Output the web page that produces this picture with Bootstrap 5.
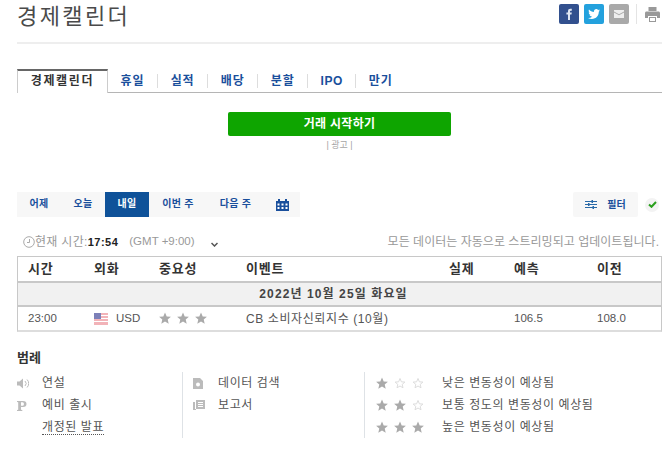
<!DOCTYPE html>
<html lang="ko">
<head>
    <meta charset="UTF-8">
    <meta name="viewport" content="width=device-width, initial-scale=1.0">
    <title>경제캘린더</title>
    <link href="https://cdn.jsdelivr.net/npm/bootstrap@5.3.2/dist/css/bootstrap.min.css" rel="stylesheet">
    <style>
        body { font-family: "Liberation Sans", "Noto Sans CJK KR", sans-serif; font-size: 12px; color: #333; background: #fff; }
        .page-wrap { width: 645px; margin-left: 17px; }
        .top-head { height: 44px; border-bottom: 2px solid #eee; }
        .page-title { font-size: 22px; line-height: 26px; letter-spacing: 2.4px; font-weight: 400; margin: 4px 0 0; color: #4a4a4a; }
        .share-wrap { gap: 5px; margin-top: 4px; margin-right: 2px; }
        .share-box { width: 20px; height: 20px; border-radius: 2px; }
        .share-fb { background: #32508e; }
        .share-tw { background: #23a1dd; }
        .share-mail { background: #a9a9a9; }
        .share-sep { width: 1px; height: 20px; background: #e4e4e4; margin: 0 3px 0 2px; }
        .cal-tabs { margin-top: 25px; height: 24px; border-bottom: 1px solid #b5b5b5; }
        .cal-tab { font-size: 12px; font-weight: 700; color: #1a4f9c; padding: 0 12.6px; line-height: 15px; border-right: 1px solid #ddd; margin-top: 5px; height: 14px; letter-spacing: .9px; }
        .cal-tab:last-child { border-right: 0; }
        .cal-tab-active { color: #333; width: 91px; height: 24px; line-height: 20px; margin-top: 0; padding: 0; text-align: center; border: 1px solid #ccc; border-top: 2px solid #666; border-bottom: 0; background: #fff; letter-spacing: 1.7px; }
        .cal-tab-latin { letter-spacing: .6px; padding: 0 12.2px; }
        .trade-zone { margin-top: 19px; }
        .trade-btn { width: 223px; height: 24px; background: #0ea500; color: #fff; font-weight: 700; font-size: 12px; border-radius: 2px; line-height: 24px; letter-spacing: .3px; }
        .ad-label { font-size: 9px; color: #a5a5a5; line-height: 12px; margin-top: 3px; }
        .date-bar { margin-top: 41px; }
        .date-nav { background: #f7f7f7; height: 25px; }
        .date-item { height: 25px; line-height: 24px; font-size: 10px; font-weight: 700; color: #1a4f9c; text-align: center; letter-spacing: .3px; }
        .date-on { background: #0f5299; color: #fff; }
        .filter-box { width: 65px; height: 25px; background: #f7f7f7; border-radius: 2px; font-size: 10px; font-weight: 700; color: #1a4f9c; gap: 10px; }
        .check-dot { width: 14px; height: 14px; border-radius: 50%; background: #f3f3f3; margin: 0 3px 0 7px; }
        .time-line { margin-top: 16px; height: 23px; color: #999; font-size: 12px; }
        .time-left { padding-left: 6px; letter-spacing: .3px; }
        .time-now { color: #222; font-weight: 700; font-size: 11px; letter-spacing: .5px; }
        .time-gmt { font-size: 11.5px; letter-spacing: 0; margin-left: 11px; }
        .time-right { letter-spacing: .03px; margin-right: 3px; }
        .cal-table { width: 645px; border: 1px solid #c8c8c8; border-bottom: 2px solid #ddd; }
        .cal-row { display: flex; align-items: center; }
        .cal-row > div { flex: none; }
        .cal-th { height: 26px; font-size: 13px; font-weight: 700; color: #333; letter-spacing: .8px; border-bottom: 2px solid #c8c8c8; }
        .cal-day { height: 24px; background: #f1f1f1; font-size: 12px; font-weight: 700; color: #444; justify-content: center; border-bottom: 2px solid #c8c8c8; letter-spacing: 1.1px; padding-right: 12px; }
        .cal-td { height: 23px; color: #555; font-size: 11.5px; }
        .c-time { width: 76px; padding-left: 10px; }
        .c-cur { width: 65px; }
        .c-imp { width: 87px; }
        .c-ev { width: 203px; }
        .cal-td .c-ev { font-size: 12px; letter-spacing: .6px; }
        .c-act { width: 65px; }
        .c-fore { width: 83px; }
        .flag-us { width: 14px; height: 12px; margin-right: 8px; }
        .legend-head { margin-top: 18px; font-size: 13px; font-weight: 700; color: #333; line-height: 16px; }
        .legend-grid { margin-top: 6px; height: 66px; color: #555; font-size: 12px; letter-spacing: .6px; }
        .legend-col { height: 66px; }
        .col-speech { width: 165px; }
        .col-data { width: 182px; padding-left: 10px; }
        .col-vol { padding-left: 11px; }
        .legend-item { height: 22px; }
        .legend-ico { width: 25px; flex: none; color: #aaa; }
        .dot-under { border-bottom: 1px dotted #555; line-height: 14px; }
        .star-cell { width: 58px; flex: none; margin-right: 8px; }
    </style>
</head>
<body>
    <div class="page-wrap">
        <div class="top-head d-flex justify-content-between align-items-start">
            <h1 class="page-title">경제캘린더</h1>
            <div class="share-wrap d-flex align-items-center">
                <span class="share-box share-fb d-flex align-items-center justify-content-center">
                    <svg width="8" height="12" viewBox="0 0 8 12"><path fill="#dfe6f2" d="M3 12V6.600H1.400V4.600H3V3.200C3 1.600 4 .8 5.300 .8H6.800V2.700H5.800C5.200 2.700 5 3 5 3.500V4.600H6.800L6.500 6.600H5V12z"/></svg>
                </span>
                <span class="share-box share-tw d-flex align-items-center justify-content-center">
                    <svg width="12" height="10" viewBox="0 0 12 10"><path fill="#fff" d="M12 1.200c-.4.200-.9.300-1.400.4.500-.3.900-.8 1.100-1.300-.5.300-1 .5-1.600.6C9.600.3 9 0 8.300 0 7 0 5.900 1.100 5.900 2.400c0 .2 0 .4.100.6C4 2.900 2.200 2 1 .5.800.9.700 1.300.7 1.700c0 .8.400 1.600 1.100 2-.4 0-.8-.1-1.100-.3 0 1.200.8 2.200 1.900 2.400-.4.100-.8.100-1.100 0 .3 1 1.200 1.700 2.300 1.700C3.900 8.400 2.500 8.900 1 8.900H0C1.100 9.600 2.400 10 3.800 10c4.500 0 7-3.700 7-7v-.3c.5-.4.900-.9 1.200-1.500z"/></svg>
                </span>
                <span class="share-box share-mail d-flex align-items-center justify-content-center">
                    <svg width="10" height="8" viewBox="0 0 10 8"><path fill="#eee" d="M0 0h10v1.500L5 4.200 0 1.500zM0 2.600l5 2.700 5-2.700V8H0z"/></svg>
                </span>
                <span class="share-sep"></span>
                <svg width="15" height="15" viewBox="0 0 15 15"><path fill="#999" d="M3.500 0h8v4h-8zM1.500 4.500h12c.8 0 1.500.7 1.500 1.500v5h-3v-2H3v2H0V6c0-.8.700-1.500 1.500-1.500zM4 10h7v5H4z"/><path fill="#fff" d="M5 11h5v3H5z"/></svg>
            </div>
        </div>

        <div class="cal-tabs d-flex">
            <div class="cal-tab cal-tab-active">경제캘린더</div>
            <div class="cal-tab">휴일</div>
            <div class="cal-tab">실적</div>
            <div class="cal-tab">배당</div>
            <div class="cal-tab">분할</div>
            <div class="cal-tab cal-tab-latin">IPO</div>
            <div class="cal-tab">만기</div>
        </div>

        <div class="trade-zone d-flex flex-column align-items-center">
            <div class="trade-btn text-center">거래 시작하기</div>
            <div class="ad-label">| 광고 |</div>
        </div>

        <div class="date-bar d-flex justify-content-between align-items-center">
            <div class="date-nav d-flex">
                <div class="date-item" style="width:44px">어제</div>
                <div class="date-item" style="width:44px">오늘</div>
                <div class="date-item date-on" style="width:44px">내일</div>
                <div class="date-item" style="width:58px">이번 주</div>
                <div class="date-item" style="width:57px">다음 주</div>
                <div class="date-item d-flex align-items-center justify-content-center" style="width:36px">
                    <svg width="13" height="12" viewBox="0 0 13 12"><path fill="#1a4f9c" d="M0 2h2V0h2v2h5V0h2v2h2v10H0z"/><path fill="#fff" d="M1.500 4.500h2v2h-2zM5.500 4.500h2v2h-2zM9.500 4.500h2v2h-2zM1.500 8h2v2h-2zM5.500 8h2v2h-2zM9.500 8h2v2h-2z"/></svg>
                </div>
            </div>
            <div class="d-flex align-items-center">
                <div class="filter-box d-flex align-items-center justify-content-center">
                    <svg width="12" height="9" viewBox="0 0 12 9"><path fill="none" stroke="#2a6aa8" d="M0 1.500h12M0 4.500h12M0 7.500h12"/><path fill="#2a6aa8" d="M6.500 0H8v3H6.500zM3 3h1.500v3H3zM7.500 6H9v3H7.500z"/></svg>
                    <span>필터</span>
                </div>
                <span class="check-dot d-flex align-items-center justify-content-center">
                    <svg width="9" height="7" viewBox="0 0 9 7"><path fill="none" stroke="#2ba01e" stroke-width="2" d="M1 3.500l2.500 2.300L8 1"/></svg>
                </span>
            </div>
        </div>

        <div class="time-line d-flex justify-content-between">
            <div class="time-left d-flex align-items-center align-self-start">
                <svg width="12" height="12" viewBox="0 0 12 12" fill="none" stroke="#aaa"><circle cx="6" cy="6" r="5.300"/><path d="M6.500 3v3.500H4"/></svg>
                <span class="ms-0">현재 시간:<span class="time-now">17:54</span></span>
                <span class="time-gmt">(GMT +9:00)</span>
                <svg class="ms-3 mt-1" width="7" height="5" viewBox="0 0 7 5"><path fill="none" stroke="#555" stroke-width="1.500" d="M.5 1l3 3 3-3"/></svg>
            </div>
            <div class="time-right align-self-start">모든 데이터는 자동으로 스트리밍되고 업데이트됩니다.</div>
        </div>

        <div class="cal-table">
            <div class="cal-row cal-th">
                <div class="c-time">시간</div>
                <div class="c-cur">외화</div>
                <div class="c-imp">중요성</div>
                <div class="c-ev">이벤트</div>
                <div class="c-act">실제</div>
                <div class="c-fore">예측</div>
                <div>이전</div>
            </div>
            <div class="cal-row cal-day">2022년 10월 25일 화요일</div>
            <div class="cal-row cal-td">
                <div class="c-time">23:00</div>
                <div class="c-cur d-flex align-items-center">
                    <svg class="flag-us" viewBox="0 0 14 12"><path fill="#f2b3b8" d="M0 0h14v12H0z"/><path fill="#fff" d="M0 2h14v1H0zM0 5h14v1H0zM0 8h14v1H0z"/><path fill="#7c80b8" d="M0 0h7v6H0z"/></svg>USD
                </div>
                <div class="c-imp d-flex align-items-center">
                    <svg width="50" height="13" viewBox="0 0 50 13" fill="#aaa"><path d="M6 .5l1.700 3.900 4.200.4-3.200 2.800 1 4.100L6 9.500l-3.700 2.200 1-4.100L.1 4.800l4.200-.4z"/><path d="M24 .5l1.700 3.900 4.200.4-3.200 2.800 1 4.100L24 9.500l-3.700 2.200 1-4.100-3.200-2.800 4.200-.4z"/><path d="M42 .5l1.700 3.900 4.200.4-3.200 2.800 1 4.100L42 9.500l-3.700 2.200 1-4.100-3.200-2.800 4.200-.4z"/></svg>
                </div>
                <div class="c-ev">CB 소비자신뢰지수 (10월)</div>
                <div class="c-act"></div>
                <div class="c-fore">106.5</div>
                <div>108.0</div>
            </div>
        </div>

        <div class="legend-head">범례</div>
        <div class="legend-grid d-flex">
            <div class="legend-col col-speech">
                <div class="legend-item d-flex align-items-center">
                    <span class="legend-ico"><svg width="12" height="11" viewBox="0 0 12 11"><path fill="#bbb" d="M0 3.500h2.500L6 .5v10L2.500 7.500H0z"/><path fill="none" stroke="#bbb" d="M8 3a3.500 3.500 0 0 1 0 5M10 1.500a5.500 5.500 0 0 1 0 8"/></svg></span>연설
                </div>
                <div class="legend-item d-flex align-items-center">
                    <span class="legend-ico"><svg width="10" height="10" viewBox="0 0 10 10"><path fill="#bbb" d="M0 0h6c2.500 0 3.500 1.300 3.500 3S8.500 6 6 6H4v2.800l1.300.2v1H0V9l1.200-.2V1.200L0 1zM4 1.200v3.600h1.500c1 0 1.400-.8 1.400-1.800S6.500 1.200 5.500 1.200z"/></svg></span>예비 출시
                </div>
                <div class="legend-item d-flex align-items-center">
                    <span class="legend-ico"></span><span class="dot-under">개정된 발표</span>
                </div>
            </div>
            <div class="legend-col col-data border-start">
                <div class="legend-item d-flex align-items-center">
                    <span class="legend-ico"><svg width="10" height="11" viewBox="0 0 10 11"><path fill="#bbb" fill-rule="evenodd" d="M0 0h7l3 3v8H0zM5 4.500a2 2 0 1 0 0 4 2 2 0 0 0 0-4z"/></svg></span>데이터 검색
                </div>
                <div class="legend-item d-flex align-items-center">
                    <span class="legend-ico"><svg width="12" height="11" viewBox="0 0 12 11"><path fill="#bbb" d="M3 0h9v9H3zM0 2h2v7h1v1H0z"/><path fill="#fff" d="M5 2h5v1H5zM5 4h5v1H5zM5 6h5v1H5z"/></svg></span>보고서
                </div>
            </div>
            <div class="legend-col col-vol border-start">
                <div class="legend-item d-flex align-items-center">
                    <span class="star-cell"><svg width="50" height="13" viewBox="0 0 50 13" fill="#aaa"><path d="M6 .5l1.700 3.900 4.200.4-3.200 2.800 1 4.100L6 9.500l-3.700 2.200 1-4.100L.1 4.800l4.200-.4z"/><path fill="none" stroke="#ddd" d="M24 1.500l1.400 3.300 3.500.3-2.700 2.300.8 3.400-3-1.800-3 1.800.8-3.400-2.700-2.300 3.500-.3z"/><path fill="none" stroke="#ddd" d="M42 1.500l1.400 3.300 3.500.3-2.700 2.300.8 3.400-3-1.800-3 1.800.8-3.400-2.700-2.300 3.500-.3z"/></svg></span><span>낮은 변동성이 예상됨</span>
                </div>
                <div class="legend-item d-flex align-items-center">
                    <span class="star-cell"><svg width="50" height="13" viewBox="0 0 50 13" fill="#aaa"><path d="M6 .5l1.700 3.900 4.200.4-3.200 2.800 1 4.100L6 9.500l-3.700 2.200 1-4.100L.1 4.800l4.200-.4z"/><path d="M24 .5l1.700 3.900 4.200.4-3.200 2.800 1 4.100L24 9.500l-3.700 2.200 1-4.100-3.200-2.800 4.200-.4z"/><path fill="none" stroke="#ddd" d="M42 1.500l1.400 3.300 3.500.3-2.700 2.300.8 3.400-3-1.800-3 1.800.8-3.400-2.700-2.300 3.500-.3z"/></svg></span><span>보통 정도의 변동성이 예상됨</span>
                </div>
                <div class="legend-item d-flex align-items-center">
                    <span class="star-cell"><svg width="50" height="13" viewBox="0 0 50 13" fill="#aaa"><path d="M6 .5l1.700 3.900 4.200.4-3.200 2.800 1 4.100L6 9.500l-3.700 2.200 1-4.100L.1 4.800l4.200-.4z"/><path d="M24 .5l1.700 3.900 4.200.4-3.200 2.800 1 4.100L24 9.500l-3.700 2.200 1-4.100-3.200-2.800 4.200-.4z"/><path d="M42 .5l1.700 3.900 4.200.4-3.200 2.800 1 4.100L42 9.500l-3.700 2.200 1-4.100-3.200-2.800 4.200-.4z"/></svg></span><span>높은 변동성이 예상됨</span>
                </div>
            </div>
        </div>
    </div>
    <script src="https://cdn.jsdelivr.net/npm/bootstrap@5.3.2/dist/js/bootstrap.bundle.min.js"></script>
</body>
</html>
